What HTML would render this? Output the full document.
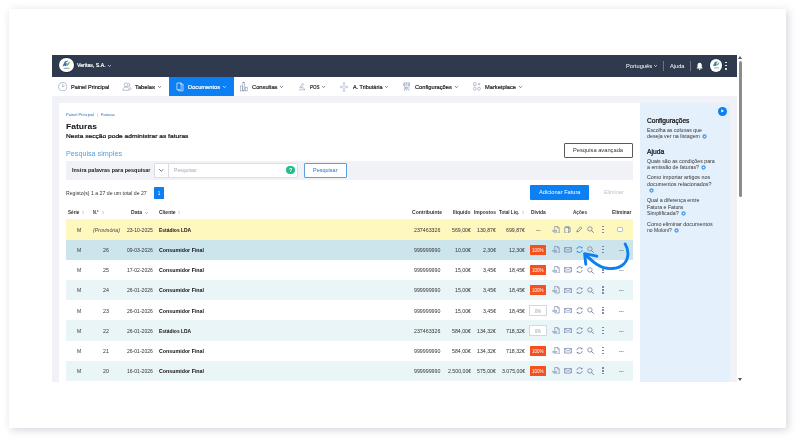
<!DOCTYPE html>
<html lang="pt"><head><meta charset="utf-8"><title>Faturas</title>
<style>
html,body{margin:0;padding:0}
body{width:800px;height:442px;position:relative;overflow:hidden;background:#fff;font-family:"Liberation Sans", sans-serif;}
.r{position:absolute;display:block}
.t{position:absolute;white-space:nowrap;line-height:1;transform-origin:0 50%;}
</style></head><body>
<div class="r" style="left:9.2px;top:9px;width:776.55px;height:418.5px;background:#fff;box-shadow:2px 2px 8px rgba(100,110,130,0.29);"></div>
<div class="r" style="left:0;top:0;width:800px;height:442px;filter:blur(0.35px)">
<div class="r" style="left:52px;top:54.75px;width:685.4px;height:22.35px;background:#2f3a4e;"></div>
<div class="r" style="left:52px;top:77.1px;width:685.4px;height:18.9px;background:#fff;"></div>
<div class="r" style="left:52px;top:96px;width:685.4px;height:286.25px;background:#f1f2f8;"></div>
<div class="r" style="left:59px;top:103.4px;width:580.85px;height:278.85px;background:#fff;"></div>
<div class="r" style="left:639.85px;top:103.4px;width:90.35px;height:278.85px;background:#e4f0fc;"></div>
<div class="r" style="left:738.8px;top:60.9px;width:2.9px;height:135.8px;background:#8c8c8c;border-radius:1.5px;"></div>
<svg class="r" style="left:738.3px;top:56.1px;" width="4" height="3" viewBox="0 0 4 3"><path d="M0 3 L2 0 L4 3Z" fill="#555"/></svg>
<svg class="r" style="left:738.3px;top:377.7px;" width="4" height="3" viewBox="0 0 4 3"><path d="M0 0 L2 3 L4 0Z" fill="#555"/></svg>
<div class="r" style="left:58.949999999999996px;top:57.15px;width:15.7px;height:15.7px;background:#222c3d;border-radius:50%;"></div>
<div class="r" style="left:59.449999999999996px;top:57.65px;width:14.7px;height:14.7px;background:#fff;border-radius:50%;"></div>
<svg class="r" style="left:59.35px;top:57.55px" width="14.9" height="14.9" viewBox="59.3 57.5 15 15"><path d="M62.8 65.7 L65.1 61.1 L68.3 60.1 L67.7 61.5 L66.3 61.9 L65.1 65.3 Z" fill="#2f72bb"/><path d="M65.7 63.1 L67.1 62.6 L66.6 65.3 L65.4 65.5Z" fill="#1c2f55"/><path d="M66.9 65.8 C69 65.1 70.1 63.2 70.3 61.1 C68.6 62 67.4 63.5 66.9 65.8Z" fill="#5cbf3a"/><rect x="64.1" y="67.3" width="5.8" height="1.2" fill="#8f9db2" opacity="0.85"/></svg>
<svg class="r" style="left:108.0px;top:64.64px;" width="3.2" height="1.92" viewBox="0 0 10 6"><path d="M1 1 L5 5 L9 1" fill="none" stroke="#fff" stroke-width="2.1" stroke-linecap="round" stroke-linejoin="round"/></svg>
<svg class="r" style="left:654.0px;top:65.44px;" width="3.2" height="1.92" viewBox="0 0 10 6"><path d="M1 1 L5 5 L9 1" fill="none" stroke="#fff" stroke-width="2.1" stroke-linecap="round" stroke-linejoin="round"/></svg>
<div class="r" style="left:663.3px;top:61.4px;width:0.6px;height:9.2px;background:#6b7587;"></div>
<div class="r" style="left:690.3px;top:61.4px;width:0.6px;height:9.2px;background:#6b7587;"></div>
<svg class="r" style="left:695.35px;top:62.0px;" width="9.3" height="8.6" viewBox="0 0 24 24"><path d="M12 2 C8 2 6 5 6 9 L6 14 L3.5 18 L20.5 18 L18 14 L18 9 C18 5 16 2 12 2Z" fill="#fff"/><circle cx="12" cy="20.5" r="2.2" fill="#fff"/></svg>
<div class="r" style="left:709.4000000000001px;top:58.900000000000006px;width:13.6px;height:13.6px;background:#222c3d;border-radius:50%;"></div>
<div class="r" style="left:709.9000000000001px;top:59.400000000000006px;width:12.6px;height:12.6px;background:#fff;border-radius:50%;"></div>
<svg class="r" style="left:709.81px;top:59.31px" width="12.77" height="12.77" viewBox="59.3 57.5 15 15"><path d="M62.8 65.7 L65.1 61.1 L68.3 60.1 L67.7 61.5 L66.3 61.9 L65.1 65.3 Z" fill="#2f72bb"/><path d="M65.7 63.1 L67.1 62.6 L66.6 65.3 L65.4 65.5Z" fill="#1c2f55"/><path d="M66.9 65.8 C69 65.1 70.1 63.2 70.3 61.1 C68.6 62 67.4 63.5 66.9 65.8Z" fill="#5cbf3a"/><rect x="64.1" y="67.3" width="5.8" height="1.2" fill="#8f9db2" opacity="0.85"/></svg>
<div class="r" style="left:725.2px;top:61.800000000000004px;width:1.6px;height:1.6px;background:#fff;border-radius:50%;"></div>
<div class="r" style="left:725.2px;top:64.9px;width:1.6px;height:1.6px;background:#fff;border-radius:50%;"></div>
<div class="r" style="left:725.2px;top:68.0px;width:1.6px;height:1.6px;background:#fff;border-radius:50%;"></div>
<svg class="r" style="left:57.8px;top:82.05px;" width="9.4" height="9.4" viewBox="0 0 24 24"><circle cx="12" cy="12" r="10.5" fill="none" stroke="#7688ad" stroke-width="1.4"/><path d="M12 5.5 L12 12.5 L17 9.5" fill="none" stroke="#7688ad" stroke-width="1.4"/></svg>
<svg class="r" style="left:122.2px;top:82.25px;" width="9.6" height="9" viewBox="0 0 24 24"><circle cx="10" cy="7.5" r="5" fill="none" stroke="#7688ad" stroke-width="1.4"/><path d="M1.5 22 C1.5 16 5 13.5 10 13.5 C15 13.5 18.5 16 18.5 22 Z" fill="none" stroke="#7688ad" stroke-width="1.4"/><path d="M15.5 3.2 C19 3.2 20.5 6 20 8.5 C19.6 10.5 18 11.6 17 11.8 C21 12.5 23 15.5 23 19.5 L20.5 19.5" fill="none" stroke="#7688ad" stroke-width="1.4"/></svg>
<svg class="r" style="left:158.0px;top:86.24px;" width="3.2" height="1.92" viewBox="0 0 10 6"><path d="M1 1 L5 5 L9 1" fill="none" stroke="#444" stroke-width="2.1" stroke-linecap="round" stroke-linejoin="round"/></svg>
<div class="r" style="left:168.75px;top:77px;width:64.75px;height:19px;background:#0c7ff2;"></div>
<svg class="r" style="left:176.0px;top:81.95px;" width="8" height="9.6" viewBox="0 0 20 25"><path d="M2 2.5 L13 2.5 L13 20 L2 20 Z" fill="none" stroke="#fff" stroke-width="1.7"/><path d="M13 6 L18 6 L18 23 L6 23 L6 20" fill="none" stroke="#fff" stroke-width="1.7"/><path d="M9 2.5 L13 6.5 L13 2.5Z" fill="#fff"/></svg>
<svg class="r" style="left:222.7px;top:86.24px;" width="3.2" height="1.92" viewBox="0 0 10 6"><path d="M1 1 L5 5 L9 1" fill="none" stroke="#fff" stroke-width="2.1" stroke-linecap="round" stroke-linejoin="round"/></svg>
<svg class="r" style="left:239.95px;top:82.1px;" width="7.6" height="9.6" viewBox="0 0 20 24"><rect x="1" y="10" width="5" height="13" fill="none" stroke="#7688ad" stroke-width="1.3"/><rect x="7.5" y="1" width="5" height="22" fill="none" stroke="#7688ad" stroke-width="1.3"/><rect x="14" y="13" width="5" height="10" fill="none" stroke="#7688ad" stroke-width="1.3"/></svg>
<svg class="r" style="left:280.2px;top:86.24px;" width="3.2" height="1.92" viewBox="0 0 10 6"><path d="M1 1 L5 5 L9 1" fill="none" stroke="#444" stroke-width="2.1" stroke-linecap="round" stroke-linejoin="round"/></svg>
<svg class="r" style="left:298.0px;top:82.4px;" width="8" height="9" viewBox="0 0 24 24"><path d="M14 2 L5 16 L10 16 L16.5 5 Z" fill="none" stroke="#7688ad" stroke-width="1.4"/><path d="M3 22 L21 22" stroke="#7688ad" stroke-width="1.5"/><path d="M10 16 L17 16 L20 22" fill="none" stroke="#7688ad" stroke-width="1.3"/></svg>
<svg class="r" style="left:322.4px;top:86.24px;" width="3.2" height="1.92" viewBox="0 0 10 6"><path d="M1 1 L5 5 L9 1" fill="none" stroke="#444" stroke-width="2.1" stroke-linecap="round" stroke-linejoin="round"/></svg>
<svg class="r" style="left:340.25px;top:81.9px;" width="8" height="10" viewBox="0 0 24 30"><circle cx="12" cy="4" r="2.6" fill="none" stroke="#7688ad" stroke-width="1.2"/><circle cx="12" cy="26" r="2.6" fill="none" stroke="#7688ad" stroke-width="1.2"/><circle cx="3.6" cy="15" r="2.6" fill="none" stroke="#7688ad" stroke-width="1.2"/><circle cx="20.4" cy="15" r="2.6" fill="none" stroke="#7688ad" stroke-width="1.2"/><rect x="9" y="9" width="6" height="12" rx="3" fill="none" stroke="#7688ad" stroke-width="1.2"/></svg>
<svg class="r" style="left:385.0px;top:86.24px;" width="3.2" height="1.92" viewBox="0 0 10 6"><path d="M1 1 L5 5 L9 1" fill="none" stroke="#444" stroke-width="2.1" stroke-linecap="round" stroke-linejoin="round"/></svg>
<svg class="r" style="left:403.05px;top:82.2px;" width="7.4" height="9.4" viewBox="0 0 20 24"><path d="M4 1 L4 23 M10 1 L10 23 M16 1 L16 23" stroke="#7688ad" stroke-width="1.3" fill="none"/><rect x="1.5" y="5" width="5" height="4" fill="#fff" stroke="#7688ad" stroke-width="1.2"/><rect x="7.5" y="14" width="5" height="4" fill="#fff" stroke="#7688ad" stroke-width="1.2"/><rect x="13.5" y="5" width="5" height="4" fill="#fff" stroke="#7688ad" stroke-width="1.2"/><path d="M1 1.5 L19 1.5" stroke="#7688ad" stroke-width="1.2"/></svg>
<svg class="r" style="left:454.7px;top:86.24px;" width="3.2" height="1.92" viewBox="0 0 10 6"><path d="M1 1 L5 5 L9 1" fill="none" stroke="#444" stroke-width="2.1" stroke-linecap="round" stroke-linejoin="round"/></svg>
<svg class="r" style="left:472.75px;top:82.4px;" width="8" height="9" viewBox="0 0 22 24"><rect x="1.5" y="1.5" width="7" height="8" rx="1.5" fill="none" stroke="#7688ad" stroke-width="1.4"/><rect x="1.5" y="14" width="7" height="8" rx="3" fill="none" stroke="#7688ad" stroke-width="1.4"/><rect x="13" y="14" width="7" height="8" rx="3" fill="none" stroke="#7688ad" stroke-width="1.4"/><path d="M16.5 2 L16.5 9 M13 5.5 L20 5.5" stroke="#7688ad" stroke-width="1.4"/></svg>
<svg class="r" style="left:518.5px;top:86.24px;" width="3.2" height="1.92" viewBox="0 0 10 6"><path d="M1 1 L5 5 L9 1" fill="none" stroke="#444" stroke-width="2.1" stroke-linecap="round" stroke-linejoin="round"/></svg>
<div class="r" style="left:564.25px;top:143.25px;width:68.25px;height:14.25px;background:#fff;box-sizing:border-box;border:0.5px solid #5a5a5a;border-radius:1px;"></div>
<div class="r" style="left:65.75px;top:161.15px;width:566.75px;height:18.65px;background:#f1f2f8;"></div>
<div class="r" style="left:154px;top:163.4px;width:144.25px;height:14.2px;background:#fff;box-sizing:border-box;border:0.6px solid #d8dde6;border-radius:1px;"></div>
<div class="r" style="left:168.2px;top:163.4px;width:0.6px;height:14.2px;background:#d8dde6;"></div>
<svg class="r" style="left:159.3px;top:169.42px;" width="4.6" height="2.76" viewBox="0 0 10 6"><path d="M1 1 L5 5 L9 1" fill="none" stroke="#667" stroke-width="2.1" stroke-linecap="round" stroke-linejoin="round"/></svg>
<div class="r" style="left:286.2px;top:165.8px;width:8.6px;height:8.6px;background:#1dbf8b;border-radius:50%;"></div>
<div class="r" style="left:303.75px;top:163.4px;width:43.0px;height:14.2px;background:#fff;box-sizing:border-box;border:0.6px solid #5b9fd8;border-radius:1px;"></div>
<div class="r" style="left:154px;top:187.4px;width:10px;height:11.2px;background:#0c7ff2;border-radius:0.5px;"></div>
<div class="r" style="left:530px;top:185.4px;width:59.25px;height:14.2px;background:#0c7ff2;border-radius:1px;"></div>
<svg class="r" style="left:81.9px;top:210.65px;" width="2.2" height="3.6" viewBox="0 0 6 10"><path d="M1 1 L5 5 L1 9" fill="none" stroke="#999" stroke-width="1.5" stroke-linecap="round" stroke-linejoin="round"/></svg>
<svg class="r" style="left:101.9px;top:210.65px;" width="2.2" height="3.6" viewBox="0 0 6 10"><path d="M1 1 L5 5 L1 9" fill="none" stroke="#999" stroke-width="1.5" stroke-linecap="round" stroke-linejoin="round"/></svg>
<svg class="r" style="left:144.5px;top:211.73px;" width="3.4" height="2.04" viewBox="0 0 10 6"><path d="M1 1 L5 5 L9 1" fill="none" stroke="#888" stroke-width="2.1" stroke-linecap="round" stroke-linejoin="round"/></svg>
<svg class="r" style="left:178.3px;top:210.65px;" width="2.2" height="3.6" viewBox="0 0 6 10"><path d="M1 1 L5 5 L1 9" fill="none" stroke="#999" stroke-width="1.5" stroke-linecap="round" stroke-linejoin="round"/></svg>
<svg class="r" style="left:522.3px;top:210.65px;" width="2.2" height="3.6" viewBox="0 0 6 10"><path d="M1 1 L5 5 L1 9" fill="none" stroke="#999" stroke-width="1.5" stroke-linecap="round" stroke-linejoin="round"/></svg>
<div class="r" style="left:65.75px;top:219.4px;width:566.75px;height:20.2px;background:#fef7be;"></div>
<svg class="r" style="left:552.4px;top:225.65px;" width="7.8" height="7.4" viewBox="0 0 26 24"><path d="M9 1 L19 1 L24 6 L24 23 L9 23 L9 19.5" fill="none" stroke="#6777a3" stroke-width="2"/><path d="M18.5 1 L18.5 6.5 L24 6.5" fill="none" stroke="#6777a3" stroke-width="1.7"/><path d="M9 1 L9 11" stroke="#6777a3" stroke-width="2"/><rect x="1" y="12.5" width="16" height="6.5" fill="#6777a3" opacity="0.55"/></svg>
<svg class="r" style="left:564.2px;top:225.65px;" width="6.8" height="7.4" viewBox="0 0 22 24"><path d="M2 5 L2 23 L15 23 L15 5 Z" fill="none" stroke="#6777a3" stroke-width="2.1"/><path d="M6 5 L6 1 L15 1 L20 6 L20 19 L15 19" fill="none" stroke="#6777a3" stroke-width="2.1"/><path d="M14 1 L14 7 L20 7" fill="none" stroke="#6777a3" stroke-width="1.6"/></svg>
<svg class="r" style="left:576.1px;top:226.25px;" width="6.8" height="6.8" viewBox="0 0 24 24"><path d="M3 21 L4.5 15 L16.5 3 L21 7.5 L9 19.5 Z" fill="none" stroke="#6777a3" stroke-width="2.6"/><path d="M3 21 L8 19.5 L4.8 16.2Z" fill="#6777a3"/></svg>
<svg class="r" style="left:587.3px;top:226.15px;" width="7.0" height="7.0" viewBox="0 0 24 24"><circle cx="10" cy="10" r="7.6" fill="none" stroke="#6777a3" stroke-width="2.4"/><path d="M15.6 15.6 L22.5 22.5" stroke="#6777a3" stroke-width="2.8" stroke-linecap="round"/></svg>
<div class="r" style="left:602.05px;top:225.7px;width:1.5px;height:1.5px;background:#6777a3;border-radius:50%;"></div>
<div class="r" style="left:602.05px;top:228.6px;width:1.5px;height:1.5px;background:#6777a3;border-radius:50%;"></div>
<div class="r" style="left:602.05px;top:231.5px;width:1.5px;height:1.5px;background:#6777a3;border-radius:50%;"></div>
<div class="r" style="left:617.4px;top:227.04999999999998px;width:5.2px;height:4.9px;background:#fff;box-sizing:border-box;border:0.7px solid #b3bccf;border-radius:1.2px;"></div>
<div class="r" style="left:65.75px;top:239.6px;width:566.75px;height:20.2px;background:#cce5ed;"></div>
<div class="r" style="left:529.8px;top:244.6px;width:16.5px;height:10.2px;background:#f4511e;border-radius:0.6px;"></div>
<svg class="r" style="left:552.4px;top:245.85px;" width="7.8" height="7.4" viewBox="0 0 26 24"><path d="M9 1 L19 1 L24 6 L24 23 L9 23 L9 19.5" fill="none" stroke="#6777a3" stroke-width="2"/><path d="M18.5 1 L18.5 6.5 L24 6.5" fill="none" stroke="#6777a3" stroke-width="1.7"/><path d="M9 1 L9 11" stroke="#6777a3" stroke-width="2"/><rect x="1" y="12.5" width="16" height="6.5" fill="#6777a3" opacity="0.55"/></svg>
<svg class="r" style="left:564.1px;top:247.25px;" width="7.8" height="5.4" viewBox="0 0 26 18"><rect x="1.2" y="1.2" width="23.6" height="15.6" rx="1.5" fill="none" stroke="#6777a3" stroke-width="2.3"/><path d="M1.5 2 L13 10.5 L24.5 2" fill="none" stroke="#6777a3" stroke-width="2"/><path d="M1.5 16 L9 8.5 M24.5 16 L17 8.5" fill="none" stroke="#6777a3" stroke-width="1.6"/></svg>
<svg class="r" style="left:575.9px;top:246.15px;" width="7.2" height="7.2" viewBox="0 0 24 24"><path d="M3 10.5 A9.2 9.2 0 0 1 19.5 6" fill="none" stroke="#1f86ea" stroke-width="2.8"/><path d="M21 13.5 A9.2 9.2 0 0 1 4.5 18" fill="none" stroke="#1f86ea" stroke-width="2.8"/><path d="M21.5 1.5 L21 8 L14.8 6.8Z" fill="#1f86ea"/><path d="M2.5 22.5 L3 16 L9.2 17.2Z" fill="#1f86ea"/></svg>
<svg class="r" style="left:587.3px;top:246.35px;" width="7.0" height="7.0" viewBox="0 0 24 24"><circle cx="10" cy="10" r="7.6" fill="none" stroke="#6777a3" stroke-width="2.4"/><path d="M15.6 15.6 L22.5 22.5" stroke="#6777a3" stroke-width="2.8" stroke-linecap="round"/></svg>
<div class="r" style="left:602.05px;top:245.89999999999998px;width:1.5px;height:1.5px;background:#6777a3;border-radius:50%;"></div>
<div class="r" style="left:602.05px;top:248.79999999999998px;width:1.5px;height:1.5px;background:#6777a3;border-radius:50%;"></div>
<div class="r" style="left:602.05px;top:251.7px;width:1.5px;height:1.5px;background:#6777a3;border-radius:50%;"></div>
<div class="r" style="left:529.8px;top:264.8px;width:16.5px;height:10.2px;background:#f4511e;border-radius:0.6px;"></div>
<svg class="r" style="left:552.4px;top:266.05px;" width="7.8" height="7.4" viewBox="0 0 26 24"><path d="M9 1 L19 1 L24 6 L24 23 L9 23 L9 19.5" fill="none" stroke="#6777a3" stroke-width="2"/><path d="M18.5 1 L18.5 6.5 L24 6.5" fill="none" stroke="#6777a3" stroke-width="1.7"/><path d="M9 1 L9 11" stroke="#6777a3" stroke-width="2"/><rect x="1" y="12.5" width="16" height="6.5" fill="#6777a3" opacity="0.55"/></svg>
<svg class="r" style="left:564.1px;top:267.45px;" width="7.8" height="5.4" viewBox="0 0 26 18"><rect x="1.2" y="1.2" width="23.6" height="15.6" rx="1.5" fill="none" stroke="#6777a3" stroke-width="2.3"/><path d="M1.5 2 L13 10.5 L24.5 2" fill="none" stroke="#6777a3" stroke-width="2"/><path d="M1.5 16 L9 8.5 M24.5 16 L17 8.5" fill="none" stroke="#6777a3" stroke-width="1.6"/></svg>
<svg class="r" style="left:575.9px;top:266.35px;" width="7.2" height="7.2" viewBox="0 0 24 24"><path d="M3 10.5 A9.2 9.2 0 0 1 19.5 6" fill="none" stroke="#6777a3" stroke-width="2.5"/><path d="M21 13.5 A9.2 9.2 0 0 1 4.5 18" fill="none" stroke="#6777a3" stroke-width="2.5"/><path d="M21.5 1.5 L21 8 L14.8 6.8Z" fill="#6777a3"/><path d="M2.5 22.5 L3 16 L9.2 17.2Z" fill="#6777a3"/></svg>
<svg class="r" style="left:587.3px;top:266.55px;" width="7.0" height="7.0" viewBox="0 0 24 24"><circle cx="10" cy="10" r="7.6" fill="none" stroke="#6777a3" stroke-width="2.4"/><path d="M15.6 15.6 L22.5 22.5" stroke="#6777a3" stroke-width="2.8" stroke-linecap="round"/></svg>
<div class="r" style="left:602.05px;top:266.09999999999997px;width:1.5px;height:1.5px;background:#6777a3;border-radius:50%;"></div>
<div class="r" style="left:602.05px;top:268.99999999999994px;width:1.5px;height:1.5px;background:#6777a3;border-radius:50%;"></div>
<div class="r" style="left:602.05px;top:271.8999999999999px;width:1.5px;height:1.5px;background:#6777a3;border-radius:50%;"></div>
<div class="r" style="left:65.75px;top:280.0px;width:566.75px;height:20.2px;background:#eaf5f8;"></div>
<div class="r" style="left:529.8px;top:285.0px;width:16.5px;height:10.2px;background:#f4511e;border-radius:0.6px;"></div>
<svg class="r" style="left:552.4px;top:286.25px;" width="7.8" height="7.4" viewBox="0 0 26 24"><path d="M9 1 L19 1 L24 6 L24 23 L9 23 L9 19.5" fill="none" stroke="#6777a3" stroke-width="2"/><path d="M18.5 1 L18.5 6.5 L24 6.5" fill="none" stroke="#6777a3" stroke-width="1.7"/><path d="M9 1 L9 11" stroke="#6777a3" stroke-width="2"/><rect x="1" y="12.5" width="16" height="6.5" fill="#6777a3" opacity="0.55"/></svg>
<svg class="r" style="left:564.1px;top:287.65px;" width="7.8" height="5.4" viewBox="0 0 26 18"><rect x="1.2" y="1.2" width="23.6" height="15.6" rx="1.5" fill="none" stroke="#6777a3" stroke-width="2.3"/><path d="M1.5 2 L13 10.5 L24.5 2" fill="none" stroke="#6777a3" stroke-width="2"/><path d="M1.5 16 L9 8.5 M24.5 16 L17 8.5" fill="none" stroke="#6777a3" stroke-width="1.6"/></svg>
<svg class="r" style="left:575.9px;top:286.55px;" width="7.2" height="7.2" viewBox="0 0 24 24"><path d="M3 10.5 A9.2 9.2 0 0 1 19.5 6" fill="none" stroke="#6777a3" stroke-width="2.5"/><path d="M21 13.5 A9.2 9.2 0 0 1 4.5 18" fill="none" stroke="#6777a3" stroke-width="2.5"/><path d="M21.5 1.5 L21 8 L14.8 6.8Z" fill="#6777a3"/><path d="M2.5 22.5 L3 16 L9.2 17.2Z" fill="#6777a3"/></svg>
<svg class="r" style="left:587.3px;top:286.75px;" width="7.0" height="7.0" viewBox="0 0 24 24"><circle cx="10" cy="10" r="7.6" fill="none" stroke="#6777a3" stroke-width="2.4"/><path d="M15.6 15.6 L22.5 22.5" stroke="#6777a3" stroke-width="2.8" stroke-linecap="round"/></svg>
<div class="r" style="left:602.05px;top:286.29999999999995px;width:1.5px;height:1.5px;background:#6777a3;border-radius:50%;"></div>
<div class="r" style="left:602.05px;top:289.19999999999993px;width:1.5px;height:1.5px;background:#6777a3;border-radius:50%;"></div>
<div class="r" style="left:602.05px;top:292.0999999999999px;width:1.5px;height:1.5px;background:#6777a3;border-radius:50%;"></div>
<div class="r" style="left:529.2px;top:304.7px;width:17.6px;height:11.2px;background:#fff;box-sizing:border-box;border:0.6px solid #d3d8e0;border-radius:0.8px;"></div>
<svg class="r" style="left:552.4px;top:306.45px;" width="7.8" height="7.4" viewBox="0 0 26 24"><path d="M9 1 L19 1 L24 6 L24 23 L9 23 L9 19.5" fill="none" stroke="#6777a3" stroke-width="2"/><path d="M18.5 1 L18.5 6.5 L24 6.5" fill="none" stroke="#6777a3" stroke-width="1.7"/><path d="M9 1 L9 11" stroke="#6777a3" stroke-width="2"/><rect x="1" y="12.5" width="16" height="6.5" fill="#6777a3" opacity="0.55"/></svg>
<svg class="r" style="left:564.1px;top:307.85px;" width="7.8" height="5.4" viewBox="0 0 26 18"><rect x="1.2" y="1.2" width="23.6" height="15.6" rx="1.5" fill="none" stroke="#6777a3" stroke-width="2.3"/><path d="M1.5 2 L13 10.5 L24.5 2" fill="none" stroke="#6777a3" stroke-width="2"/><path d="M1.5 16 L9 8.5 M24.5 16 L17 8.5" fill="none" stroke="#6777a3" stroke-width="1.6"/></svg>
<svg class="r" style="left:575.9px;top:306.75px;" width="7.2" height="7.2" viewBox="0 0 24 24"><path d="M3 10.5 A9.2 9.2 0 0 1 19.5 6" fill="none" stroke="#6777a3" stroke-width="2.5"/><path d="M21 13.5 A9.2 9.2 0 0 1 4.5 18" fill="none" stroke="#6777a3" stroke-width="2.5"/><path d="M21.5 1.5 L21 8 L14.8 6.8Z" fill="#6777a3"/><path d="M2.5 22.5 L3 16 L9.2 17.2Z" fill="#6777a3"/></svg>
<svg class="r" style="left:587.3px;top:306.95px;" width="7.0" height="7.0" viewBox="0 0 24 24"><circle cx="10" cy="10" r="7.6" fill="none" stroke="#6777a3" stroke-width="2.4"/><path d="M15.6 15.6 L22.5 22.5" stroke="#6777a3" stroke-width="2.8" stroke-linecap="round"/></svg>
<div class="r" style="left:602.05px;top:306.5px;width:1.5px;height:1.5px;background:#6777a3;border-radius:50%;"></div>
<div class="r" style="left:602.05px;top:309.4px;width:1.5px;height:1.5px;background:#6777a3;border-radius:50%;"></div>
<div class="r" style="left:602.05px;top:312.29999999999995px;width:1.5px;height:1.5px;background:#6777a3;border-radius:50%;"></div>
<div class="r" style="left:65.75px;top:320.4px;width:566.75px;height:20.2px;background:#eaf5f8;"></div>
<div class="r" style="left:529.2px;top:324.9px;width:17.6px;height:11.2px;background:#fff;box-sizing:border-box;border:0.6px solid #d3d8e0;border-radius:0.8px;"></div>
<svg class="r" style="left:552.4px;top:326.65px;" width="7.8" height="7.4" viewBox="0 0 26 24"><path d="M9 1 L19 1 L24 6 L24 23 L9 23 L9 19.5" fill="none" stroke="#6777a3" stroke-width="2"/><path d="M18.5 1 L18.5 6.5 L24 6.5" fill="none" stroke="#6777a3" stroke-width="1.7"/><path d="M9 1 L9 11" stroke="#6777a3" stroke-width="2"/><rect x="1" y="12.5" width="16" height="6.5" fill="#6777a3" opacity="0.55"/></svg>
<svg class="r" style="left:564.1px;top:328.05px;" width="7.8" height="5.4" viewBox="0 0 26 18"><rect x="1.2" y="1.2" width="23.6" height="15.6" rx="1.5" fill="none" stroke="#6777a3" stroke-width="2.3"/><path d="M1.5 2 L13 10.5 L24.5 2" fill="none" stroke="#6777a3" stroke-width="2"/><path d="M1.5 16 L9 8.5 M24.5 16 L17 8.5" fill="none" stroke="#6777a3" stroke-width="1.6"/></svg>
<svg class="r" style="left:575.9px;top:326.95px;" width="7.2" height="7.2" viewBox="0 0 24 24"><path d="M3 10.5 A9.2 9.2 0 0 1 19.5 6" fill="none" stroke="#6777a3" stroke-width="2.5"/><path d="M21 13.5 A9.2 9.2 0 0 1 4.5 18" fill="none" stroke="#6777a3" stroke-width="2.5"/><path d="M21.5 1.5 L21 8 L14.8 6.8Z" fill="#6777a3"/><path d="M2.5 22.5 L3 16 L9.2 17.2Z" fill="#6777a3"/></svg>
<svg class="r" style="left:587.3px;top:327.15px;" width="7.0" height="7.0" viewBox="0 0 24 24"><circle cx="10" cy="10" r="7.6" fill="none" stroke="#6777a3" stroke-width="2.4"/><path d="M15.6 15.6 L22.5 22.5" stroke="#6777a3" stroke-width="2.8" stroke-linecap="round"/></svg>
<div class="r" style="left:602.05px;top:326.7px;width:1.5px;height:1.5px;background:#6777a3;border-radius:50%;"></div>
<div class="r" style="left:602.05px;top:329.59999999999997px;width:1.5px;height:1.5px;background:#6777a3;border-radius:50%;"></div>
<div class="r" style="left:602.05px;top:332.49999999999994px;width:1.5px;height:1.5px;background:#6777a3;border-radius:50%;"></div>
<div class="r" style="left:529.8px;top:345.6px;width:16.5px;height:10.2px;background:#f4511e;border-radius:0.6px;"></div>
<svg class="r" style="left:552.4px;top:346.85px;" width="7.8" height="7.4" viewBox="0 0 26 24"><path d="M9 1 L19 1 L24 6 L24 23 L9 23 L9 19.5" fill="none" stroke="#6777a3" stroke-width="2"/><path d="M18.5 1 L18.5 6.5 L24 6.5" fill="none" stroke="#6777a3" stroke-width="1.7"/><path d="M9 1 L9 11" stroke="#6777a3" stroke-width="2"/><rect x="1" y="12.5" width="16" height="6.5" fill="#6777a3" opacity="0.55"/></svg>
<svg class="r" style="left:564.1px;top:348.25px;" width="7.8" height="5.4" viewBox="0 0 26 18"><rect x="1.2" y="1.2" width="23.6" height="15.6" rx="1.5" fill="none" stroke="#6777a3" stroke-width="2.3"/><path d="M1.5 2 L13 10.5 L24.5 2" fill="none" stroke="#6777a3" stroke-width="2"/><path d="M1.5 16 L9 8.5 M24.5 16 L17 8.5" fill="none" stroke="#6777a3" stroke-width="1.6"/></svg>
<svg class="r" style="left:575.9px;top:347.15px;" width="7.2" height="7.2" viewBox="0 0 24 24"><path d="M3 10.5 A9.2 9.2 0 0 1 19.5 6" fill="none" stroke="#6777a3" stroke-width="2.5"/><path d="M21 13.5 A9.2 9.2 0 0 1 4.5 18" fill="none" stroke="#6777a3" stroke-width="2.5"/><path d="M21.5 1.5 L21 8 L14.8 6.8Z" fill="#6777a3"/><path d="M2.5 22.5 L3 16 L9.2 17.2Z" fill="#6777a3"/></svg>
<svg class="r" style="left:587.3px;top:347.35px;" width="7.0" height="7.0" viewBox="0 0 24 24"><circle cx="10" cy="10" r="7.6" fill="none" stroke="#6777a3" stroke-width="2.4"/><path d="M15.6 15.6 L22.5 22.5" stroke="#6777a3" stroke-width="2.8" stroke-linecap="round"/></svg>
<div class="r" style="left:602.05px;top:346.9px;width:1.5px;height:1.5px;background:#6777a3;border-radius:50%;"></div>
<div class="r" style="left:602.05px;top:349.79999999999995px;width:1.5px;height:1.5px;background:#6777a3;border-radius:50%;"></div>
<div class="r" style="left:602.05px;top:352.69999999999993px;width:1.5px;height:1.5px;background:#6777a3;border-radius:50%;"></div>
<div class="r" style="left:65.75px;top:360.8px;width:566.75px;height:19.9px;background:#eaf5f8;"></div>
<div class="r" style="left:529.8px;top:365.8px;width:16.5px;height:10.2px;background:#f4511e;border-radius:0.6px;"></div>
<svg class="r" style="left:552.4px;top:367.05px;" width="7.8" height="7.4" viewBox="0 0 26 24"><path d="M9 1 L19 1 L24 6 L24 23 L9 23 L9 19.5" fill="none" stroke="#6777a3" stroke-width="2"/><path d="M18.5 1 L18.5 6.5 L24 6.5" fill="none" stroke="#6777a3" stroke-width="1.7"/><path d="M9 1 L9 11" stroke="#6777a3" stroke-width="2"/><rect x="1" y="12.5" width="16" height="6.5" fill="#6777a3" opacity="0.55"/></svg>
<svg class="r" style="left:564.1px;top:368.45px;" width="7.8" height="5.4" viewBox="0 0 26 18"><rect x="1.2" y="1.2" width="23.6" height="15.6" rx="1.5" fill="none" stroke="#6777a3" stroke-width="2.3"/><path d="M1.5 2 L13 10.5 L24.5 2" fill="none" stroke="#6777a3" stroke-width="2"/><path d="M1.5 16 L9 8.5 M24.5 16 L17 8.5" fill="none" stroke="#6777a3" stroke-width="1.6"/></svg>
<svg class="r" style="left:575.9px;top:367.35px;" width="7.2" height="7.2" viewBox="0 0 24 24"><path d="M3 10.5 A9.2 9.2 0 0 1 19.5 6" fill="none" stroke="#6777a3" stroke-width="2.5"/><path d="M21 13.5 A9.2 9.2 0 0 1 4.5 18" fill="none" stroke="#6777a3" stroke-width="2.5"/><path d="M21.5 1.5 L21 8 L14.8 6.8Z" fill="#6777a3"/><path d="M2.5 22.5 L3 16 L9.2 17.2Z" fill="#6777a3"/></svg>
<svg class="r" style="left:587.3px;top:367.55px;" width="7.0" height="7.0" viewBox="0 0 24 24"><circle cx="10" cy="10" r="7.6" fill="none" stroke="#6777a3" stroke-width="2.4"/><path d="M15.6 15.6 L22.5 22.5" stroke="#6777a3" stroke-width="2.8" stroke-linecap="round"/></svg>
<div class="r" style="left:602.05px;top:367.1px;width:1.5px;height:1.5px;background:#6777a3;border-radius:50%;"></div>
<div class="r" style="left:602.05px;top:370.0px;width:1.5px;height:1.5px;background:#6777a3;border-radius:50%;"></div>
<div class="r" style="left:602.05px;top:372.9px;width:1.5px;height:1.5px;background:#6777a3;border-radius:50%;"></div>
<svg class="r" style="left:575px;top:238px" width="60" height="36" viewBox="575 238 60 36"><path d="M625.2 244 C628.9 250 629.1 258 624.3 263.4 C618.5 269.4 606.5 270.6 597.5 264.8 C592.5 261.5 589 258 585.8 255" fill="none" stroke="#0c7ff2" stroke-width="2.9" stroke-linecap="round"/><path d="M596.8 256.2 L584.6 253.6 L585.8 264.2" fill="none" stroke="#0c7ff2" stroke-width="2.9" stroke-linecap="round" stroke-linejoin="round"/></svg>
<div class="r" style="left:718.1px;top:106.6px;width:9.0px;height:9.0px;background:#0c7ff2;border-radius:50%;"></div>
<svg class="r" style="left:721.2px;top:109.2px;" width="3.4" height="3.8" viewBox="0 0 10 10"><path d="M1 0.5 L9 5 L1 9.5Z" fill="#fff"/></svg>
<svg class="r" style="left:702.3px;top:133.7px;" width="5" height="5" viewBox="0 0 10 10"><circle cx="5" cy="5" r="4.3" fill="#4a9de9"/><circle cx="5" cy="5" r="1.6" fill="#eef6ff"/></svg>
<svg class="r" style="left:701.25px;top:165.1px;" width="5" height="5" viewBox="0 0 10 10"><circle cx="5" cy="5" r="4.3" fill="#4a9de9"/><circle cx="5" cy="5" r="1.6" fill="#eef6ff"/></svg>
<svg class="r" style="left:648.8px;top:187.9px;" width="5" height="5" viewBox="0 0 10 10"><circle cx="5" cy="5" r="4.3" fill="#4a9de9"/><circle cx="5" cy="5" r="1.6" fill="#eef6ff"/></svg>
<svg class="r" style="left:680.5px;top:211.2px;" width="5" height="5" viewBox="0 0 10 10"><circle cx="5" cy="5" r="4.3" fill="#4a9de9"/><circle cx="5" cy="5" r="1.6" fill="#eef6ff"/></svg>
<svg class="r" style="left:673.75px;top:228.1px;" width="5" height="5" viewBox="0 0 10 10"><circle cx="5" cy="5" r="4.3" fill="#4a9de9"/><circle cx="5" cy="5" r="1.6" fill="#eef6ff"/></svg>
<span class="t" style="left:76.9px;top:63px;font-size:5.7px;font-weight:400;color:#fff;-webkit-text-stroke:0.2px #fff;transform:scaleX(0.9138);">Veritas, S.A.</span>
<span class="t" style="left:625.75px;top:64px;font-size:5.2px;font-weight:400;color:#fff;transform:scaleX(1.0991);">Português</span>
<span class="t" style="left:670px;top:64px;font-size:5.2px;font-weight:400;color:#fff;transform:scaleX(1.0918);">Ajuda</span>
<span class="t" style="left:70.5px;top:85px;font-size:5.5px;font-weight:400;color:#222;-webkit-text-stroke:0.193px #222;transform:scaleX(1.0087);">Painel Principal</span>
<span class="t" style="left:135px;top:85px;font-size:5.5px;font-weight:400;color:#222;-webkit-text-stroke:0.193px #222;transform:scaleX(1.0544);">Tabelas</span>
<span class="t" style="left:187.5px;top:85px;font-size:5.5px;font-weight:400;color:#fff;-webkit-text-stroke:0.193px #fff;transform:scaleX(1.0359);">Documentos</span>
<span class="t" style="left:252px;top:85px;font-size:5.5px;font-weight:400;color:#222;-webkit-text-stroke:0.193px #222;transform:scaleX(1.0421);">Consultas</span>
<span class="t" style="left:310px;top:85px;font-size:5.5px;font-weight:400;color:#222;-webkit-text-stroke:0.193px #222;transform:scaleX(0.8172);">POS</span>
<span class="t" style="left:352.5px;top:85px;font-size:5.5px;font-weight:400;color:#222;-webkit-text-stroke:0.193px #222;transform:scaleX(0.9947);">A. Tributária</span>
<span class="t" style="left:415px;top:85px;font-size:5.5px;font-weight:400;color:#222;-webkit-text-stroke:0.193px #222;transform:scaleX(1.0361);">Configurações</span>
<span class="t" style="left:484.5px;top:85px;font-size:5.5px;font-weight:400;color:#222;-webkit-text-stroke:0.193px #222;transform:scaleX(1.0344);">Marketplace</span>
<span class="t" style="left:66px;top:113px;font-size:3.9px;font-weight:400;color:#2b6cb8;transform:scaleX(1.0437);">Painel Principal</span>
<span class="t" style="left:97.0px;top:113px;font-size:3.9px;font-weight:400;color:#9aa;">|</span>
<span class="t" style="left:100.6px;top:113px;font-size:3.9px;font-weight:400;color:#2b6cb8;transform:scaleX(1.0452);">Faturas</span>
<span class="t" style="left:66px;top:123px;font-size:8.0px;font-weight:700;color:#111;transform:scaleX(1.0690);">Faturas</span>
<span class="t" style="left:66px;top:133px;font-size:6.0px;font-weight:400;color:#111;-webkit-text-stroke:0.21px #111;transform:scaleX(1.1053);">Nesta secção pode administrar as faturas</span>
<span class="t" style="left:66px;top:151px;font-size:6.6px;font-weight:400;color:#4fa3e3;transform:scaleX(1.0914);">Pesquisa simples</span>
<span class="t" style="left:573.25px;top:148px;font-size:5.3px;font-weight:400;color:#333;transform:scaleX(1.0814);">Pesquisa avançada</span>
<span class="t" style="left:72px;top:168px;font-size:5.4px;font-weight:700;color:#222;transform:scaleX(1.0102);">Insira palavras para pesquisar</span>
<span class="t" style="left:174px;top:169px;font-size:4.8px;font-weight:400;color:#a3a8b3;transform:scaleX(1.0589);">Pesquisar</span>
<span class="t" style="left:289.0px;top:168px;font-size:5.4px;font-weight:700;color:#fff;">?</span>
<span class="t" style="left:313px;top:168px;font-size:5.3px;font-weight:400;color:#2470c0;transform:scaleX(1.0398);">Pesquisar</span>
<span class="t" style="left:66px;top:191px;font-size:5.1px;font-weight:400;color:#333;transform:scaleX(1.0147);">Registo(s) 1 a 27 de um total de 27</span>
<span class="t" style="left:157.8px;top:192px;font-size:4.6px;font-weight:400;color:#fff;">1</span>
<span class="t" style="left:539px;top:190px;font-size:5.3px;font-weight:400;color:#fff;transform:scaleX(1.0675);">Adicionar Fatura</span>
<span class="t" style="left:603.75px;top:190px;font-size:5.3px;font-weight:400;color:#b9bec8;transform:scaleX(1.0188);">Eliminar</span>
<span class="t" style="left:67.6px;top:211px;font-size:4.9px;font-weight:700;color:#333;transform:scaleX(0.9525);">Série</span>
<span class="t" style="left:93px;top:211px;font-size:4.9px;font-weight:700;color:#333;transform:scaleX(0.8075);">N.º</span>
<span class="t" style="left:131px;top:211px;font-size:4.9px;font-weight:700;color:#333;transform:scaleX(1.0368);">Data</span>
<span class="t" style="left:159px;top:211px;font-size:4.9px;font-weight:700;color:#333;transform:scaleX(1.0176);">Cliente</span>
<span class="t" style="left:411.6px;top:211px;font-size:4.9px;font-weight:700;color:#333;transform:scaleX(1.0317);">Contribuinte</span>
<span class="t" style="left:453.4px;top:211px;font-size:4.9px;font-weight:700;color:#333;transform:scaleX(1.0005);">Ilíquido</span>
<span class="t" style="left:474px;top:211px;font-size:4.9px;font-weight:700;color:#333;transform:scaleX(1.0115);">Impostos</span>
<span class="t" style="left:499.4px;top:211px;font-size:4.9px;font-weight:700;color:#333;transform:scaleX(0.9357);">Total Líq.</span>
<span class="t" style="left:530.6px;top:211px;font-size:4.9px;font-weight:700;color:#333;transform:scaleX(1.0077);">Dívida</span>
<span class="t" style="left:572.5px;top:211px;font-size:4.9px;font-weight:700;color:#333;transform:scaleX(0.9532);">Ações</span>
<span class="t" style="left:611.75px;top:211px;font-size:4.9px;font-weight:700;color:#333;transform:scaleX(1.0097);">Eliminar</span>
<span class="t" style="left:76.5px;top:228px;font-size:5.1px;font-weight:400;color:#333;transform:scaleX(0.9882);">M</span>
<span class="t" style="left:93px;top:229px;font-size:4.9px;font-weight:400;color:#444;font-style:italic;transform:scaleX(1.0793);">(Provisória)</span>
<span class="t" style="left:126.6px;top:228px;font-size:5.1px;font-weight:400;color:#333;transform:scaleX(0.9899);">23-10-2025</span>
<span class="t" style="left:159.4px;top:228px;font-size:5.0px;font-weight:700;color:#111;transform:scaleX(0.9903);">Estádios LDA</span>
<span class="t" style="left:413.6px;top:228px;font-size:5.1px;font-weight:400;color:#333;transform:scaleX(1.0353);">237463326</span>
<span class="t" style="left:451.84px;top:228px;font-size:5.1px;font-weight:400;color:#333;transform:scaleX(1.0291);">569,00€</span>
<span class="t" style="left:477.04px;top:228px;font-size:5.1px;font-weight:400;color:#333;transform:scaleX(1.0291);">130,87€</span>
<span class="t" style="left:506.44px;top:228px;font-size:5.1px;font-weight:400;color:#333;transform:scaleX(1.0291);">699,87€</span>
<span class="t" style="left:535.6px;top:228px;font-size:5.1px;font-weight:400;color:#444;transform:scaleX(0.9423);">---</span>
<span class="t" style="left:76.5px;top:248px;font-size:5.1px;font-weight:400;color:#333;transform:scaleX(0.9882);">M</span>
<span class="t" style="left:103.27px;top:248px;font-size:5.1px;font-weight:400;color:#333;transform:scaleX(1.0332);">26</span>
<span class="t" style="left:126.6px;top:248px;font-size:5.1px;font-weight:400;color:#333;transform:scaleX(0.9899);">09-03-2026</span>
<span class="t" style="left:159.4px;top:248px;font-size:5.0px;font-weight:700;color:#111;transform:scaleX(1.0588);">Consumidor Final</span>
<span class="t" style="left:413.6px;top:248px;font-size:5.1px;font-weight:400;color:#333;transform:scaleX(1.0353);">999999990</span>
<span class="t" style="left:454.77px;top:248px;font-size:5.1px;font-weight:400;color:#333;transform:scaleX(1.0278);">10,00€</span>
<span class="t" style="left:482.9px;top:248px;font-size:5.1px;font-weight:400;color:#333;transform:scaleX(1.0272);">2,30€</span>
<span class="t" style="left:509.37px;top:248px;font-size:5.1px;font-weight:400;color:#333;transform:scaleX(1.0278);">12,30€</span>
<span class="t" style="left:532.4px;top:248px;font-size:5.0px;font-weight:400;color:#fff;transform:scaleX(0.9065);">100%</span>
<span class="t" style="left:619.0px;top:248px;font-size:5.1px;font-weight:400;color:#444;transform:scaleX(0.9227);">---</span>
<span class="t" style="left:76.5px;top:268px;font-size:5.1px;font-weight:400;color:#333;transform:scaleX(0.9882);">M</span>
<span class="t" style="left:103.27px;top:268px;font-size:5.1px;font-weight:400;color:#333;transform:scaleX(1.0332);">25</span>
<span class="t" style="left:126.6px;top:268px;font-size:5.1px;font-weight:400;color:#333;transform:scaleX(0.9899);">17-02-2026</span>
<span class="t" style="left:159.4px;top:268px;font-size:5.0px;font-weight:700;color:#111;transform:scaleX(1.0588);">Consumidor Final</span>
<span class="t" style="left:413.6px;top:268px;font-size:5.1px;font-weight:400;color:#333;transform:scaleX(1.0353);">999999990</span>
<span class="t" style="left:454.77px;top:268px;font-size:5.1px;font-weight:400;color:#333;transform:scaleX(1.0278);">15,00€</span>
<span class="t" style="left:482.9px;top:268px;font-size:5.1px;font-weight:400;color:#333;transform:scaleX(1.0272);">3,45€</span>
<span class="t" style="left:509.37px;top:268px;font-size:5.1px;font-weight:400;color:#333;transform:scaleX(1.0278);">18,45€</span>
<span class="t" style="left:532.4px;top:268px;font-size:5.0px;font-weight:400;color:#fff;transform:scaleX(0.9065);">100%</span>
<span class="t" style="left:619.0px;top:268px;font-size:5.1px;font-weight:400;color:#444;transform:scaleX(0.9227);">---</span>
<span class="t" style="left:76.5px;top:288px;font-size:5.1px;font-weight:400;color:#333;transform:scaleX(0.9882);">M</span>
<span class="t" style="left:103.27px;top:288px;font-size:5.1px;font-weight:400;color:#333;transform:scaleX(1.0332);">24</span>
<span class="t" style="left:126.6px;top:288px;font-size:5.1px;font-weight:400;color:#333;transform:scaleX(0.9899);">26-01-2026</span>
<span class="t" style="left:159.4px;top:288px;font-size:5.0px;font-weight:700;color:#111;transform:scaleX(1.0588);">Consumidor Final</span>
<span class="t" style="left:413.6px;top:288px;font-size:5.1px;font-weight:400;color:#333;transform:scaleX(1.0353);">999999990</span>
<span class="t" style="left:454.77px;top:288px;font-size:5.1px;font-weight:400;color:#333;transform:scaleX(1.0278);">15,00€</span>
<span class="t" style="left:482.9px;top:288px;font-size:5.1px;font-weight:400;color:#333;transform:scaleX(1.0272);">3,45€</span>
<span class="t" style="left:509.37px;top:288px;font-size:5.1px;font-weight:400;color:#333;transform:scaleX(1.0278);">18,45€</span>
<span class="t" style="left:532.4px;top:288px;font-size:5.0px;font-weight:400;color:#fff;transform:scaleX(0.9065);">100%</span>
<span class="t" style="left:619.0px;top:288px;font-size:5.1px;font-weight:400;color:#444;transform:scaleX(0.9227);">---</span>
<span class="t" style="left:76.5px;top:309px;font-size:5.1px;font-weight:400;color:#333;transform:scaleX(0.9882);">M</span>
<span class="t" style="left:103.27px;top:309px;font-size:5.1px;font-weight:400;color:#333;transform:scaleX(1.0332);">23</span>
<span class="t" style="left:126.6px;top:309px;font-size:5.1px;font-weight:400;color:#333;transform:scaleX(0.9899);">26-01-2026</span>
<span class="t" style="left:159.4px;top:309px;font-size:5.0px;font-weight:700;color:#111;transform:scaleX(1.0588);">Consumidor Final</span>
<span class="t" style="left:413.6px;top:309px;font-size:5.1px;font-weight:400;color:#333;transform:scaleX(1.0353);">999999990</span>
<span class="t" style="left:454.77px;top:309px;font-size:5.1px;font-weight:400;color:#333;transform:scaleX(1.0278);">15,00€</span>
<span class="t" style="left:482.9px;top:309px;font-size:5.1px;font-weight:400;color:#333;transform:scaleX(1.0272);">3,45€</span>
<span class="t" style="left:509.37px;top:309px;font-size:5.1px;font-weight:400;color:#333;transform:scaleX(1.0278);">18,45€</span>
<span class="t" style="left:535.2px;top:310px;font-size:4.6px;font-weight:400;color:#9aa0ab;transform:scaleX(0.9035);">0%</span>
<span class="t" style="left:619.0px;top:309px;font-size:5.1px;font-weight:400;color:#444;transform:scaleX(0.9227);">---</span>
<span class="t" style="left:76.5px;top:329px;font-size:5.1px;font-weight:400;color:#333;transform:scaleX(0.9882);">M</span>
<span class="t" style="left:103.27px;top:329px;font-size:5.1px;font-weight:400;color:#333;transform:scaleX(1.0332);">22</span>
<span class="t" style="left:126.6px;top:329px;font-size:5.1px;font-weight:400;color:#333;transform:scaleX(0.9899);">26-01-2026</span>
<span class="t" style="left:159.4px;top:329px;font-size:5.0px;font-weight:700;color:#111;transform:scaleX(0.9903);">Estádios LDA</span>
<span class="t" style="left:413.6px;top:329px;font-size:5.1px;font-weight:400;color:#333;transform:scaleX(1.0353);">237463326</span>
<span class="t" style="left:451.84px;top:329px;font-size:5.1px;font-weight:400;color:#333;transform:scaleX(1.0291);">584,00€</span>
<span class="t" style="left:477.04px;top:329px;font-size:5.1px;font-weight:400;color:#333;transform:scaleX(1.0291);">134,32€</span>
<span class="t" style="left:506.44px;top:329px;font-size:5.1px;font-weight:400;color:#333;transform:scaleX(1.0291);">718,32€</span>
<span class="t" style="left:535.2px;top:330px;font-size:4.6px;font-weight:400;color:#9aa0ab;transform:scaleX(0.9035);">0%</span>
<span class="t" style="left:619.0px;top:329px;font-size:5.1px;font-weight:400;color:#444;transform:scaleX(0.9227);">---</span>
<span class="t" style="left:76.5px;top:349px;font-size:5.1px;font-weight:400;color:#333;transform:scaleX(0.9882);">M</span>
<span class="t" style="left:103.27px;top:349px;font-size:5.1px;font-weight:400;color:#333;transform:scaleX(1.0332);">21</span>
<span class="t" style="left:126.6px;top:349px;font-size:5.1px;font-weight:400;color:#333;transform:scaleX(0.9899);">26-01-2026</span>
<span class="t" style="left:159.4px;top:349px;font-size:5.0px;font-weight:700;color:#111;transform:scaleX(1.0588);">Consumidor Final</span>
<span class="t" style="left:413.6px;top:349px;font-size:5.1px;font-weight:400;color:#333;transform:scaleX(1.0353);">999999990</span>
<span class="t" style="left:451.84px;top:349px;font-size:5.1px;font-weight:400;color:#333;transform:scaleX(1.0291);">584,00€</span>
<span class="t" style="left:477.04px;top:349px;font-size:5.1px;font-weight:400;color:#333;transform:scaleX(1.0291);">134,32€</span>
<span class="t" style="left:506.44px;top:349px;font-size:5.1px;font-weight:400;color:#333;transform:scaleX(1.0291);">718,32€</span>
<span class="t" style="left:532.4px;top:349px;font-size:5.0px;font-weight:400;color:#fff;transform:scaleX(0.9065);">100%</span>
<span class="t" style="left:619.0px;top:349px;font-size:5.1px;font-weight:400;color:#444;transform:scaleX(0.9227);">---</span>
<span class="t" style="left:76.5px;top:369px;font-size:5.1px;font-weight:400;color:#333;transform:scaleX(0.9882);">M</span>
<span class="t" style="left:103.27px;top:369px;font-size:5.1px;font-weight:400;color:#333;transform:scaleX(1.0332);">20</span>
<span class="t" style="left:126.6px;top:369px;font-size:5.1px;font-weight:400;color:#333;transform:scaleX(0.9899);">16-01-2026</span>
<span class="t" style="left:159.4px;top:369px;font-size:5.0px;font-weight:700;color:#111;transform:scaleX(1.0588);">Consumidor Final</span>
<span class="t" style="left:413.6px;top:369px;font-size:5.1px;font-weight:400;color:#333;transform:scaleX(1.0353);">999999990</span>
<span class="t" style="left:447.54px;top:369px;font-size:5.1px;font-weight:400;color:#333;transform:scaleX(1.0261);">2.500,00€</span>
<span class="t" style="left:477.04px;top:369px;font-size:5.1px;font-weight:400;color:#333;transform:scaleX(1.0291);">575,00€</span>
<span class="t" style="left:502.14px;top:369px;font-size:5.1px;font-weight:400;color:#333;transform:scaleX(1.0261);">3.075,00€</span>
<span class="t" style="left:532.4px;top:369px;font-size:5.0px;font-weight:400;color:#fff;transform:scaleX(0.9065);">100%</span>
<span class="t" style="left:619.0px;top:369px;font-size:5.1px;font-weight:400;color:#444;transform:scaleX(0.9227);">---</span>
<span class="t" style="left:647px;top:118px;font-size:6.4px;font-weight:400;color:#111;-webkit-text-stroke:0.224px #111;transform:scaleX(1.0287);">Configurações</span>
<span class="t" style="left:647px;top:128px;font-size:5.0px;font-weight:400;color:#333;transform:scaleX(1.0414);">Escolha as colunas que</span>
<span class="t" style="left:647px;top:134px;font-size:5.0px;font-weight:400;color:#333;transform:scaleX(1.0593);">deseja ver na listagem</span>
<span class="t" style="left:647px;top:149px;font-size:6.4px;font-weight:400;color:#111;-webkit-text-stroke:0.224px #111;transform:scaleX(1.0514);">Ajuda</span>
<span class="t" style="left:647px;top:159px;font-size:5.0px;font-weight:400;color:#333;transform:scaleX(1.0514);">Quais são as condições para</span>
<span class="t" style="left:647px;top:165px;font-size:5.0px;font-weight:400;color:#333;transform:scaleX(1.0568);">a emissão de faturas?</span>
<span class="t" style="left:647px;top:175px;font-size:5.0px;font-weight:400;color:#333;transform:scaleX(1.0726);">Como importar artigos nos</span>
<span class="t" style="left:647px;top:182px;font-size:5.0px;font-weight:400;color:#333;transform:scaleX(1.0792);">documentos relacionados?</span>
<span class="t" style="left:647px;top:198px;font-size:5.0px;font-weight:400;color:#333;transform:scaleX(1.0589);">Qual a diferença entre</span>
<span class="t" style="left:647px;top:205px;font-size:5.0px;font-weight:400;color:#333;transform:scaleX(1.0444);">Fatura e Fatura</span>
<span class="t" style="left:647px;top:211px;font-size:5.0px;font-weight:400;color:#333;transform:scaleX(1.0622);">Simplificada?</span>
<span class="t" style="left:647px;top:222px;font-size:5.0px;font-weight:400;color:#333;transform:scaleX(1.0779);">Como eliminar documentos</span>
<span class="t" style="left:647px;top:228px;font-size:5.0px;font-weight:400;color:#333;transform:scaleX(1.0135);">no Moloni?</span>
</div></body></html>
